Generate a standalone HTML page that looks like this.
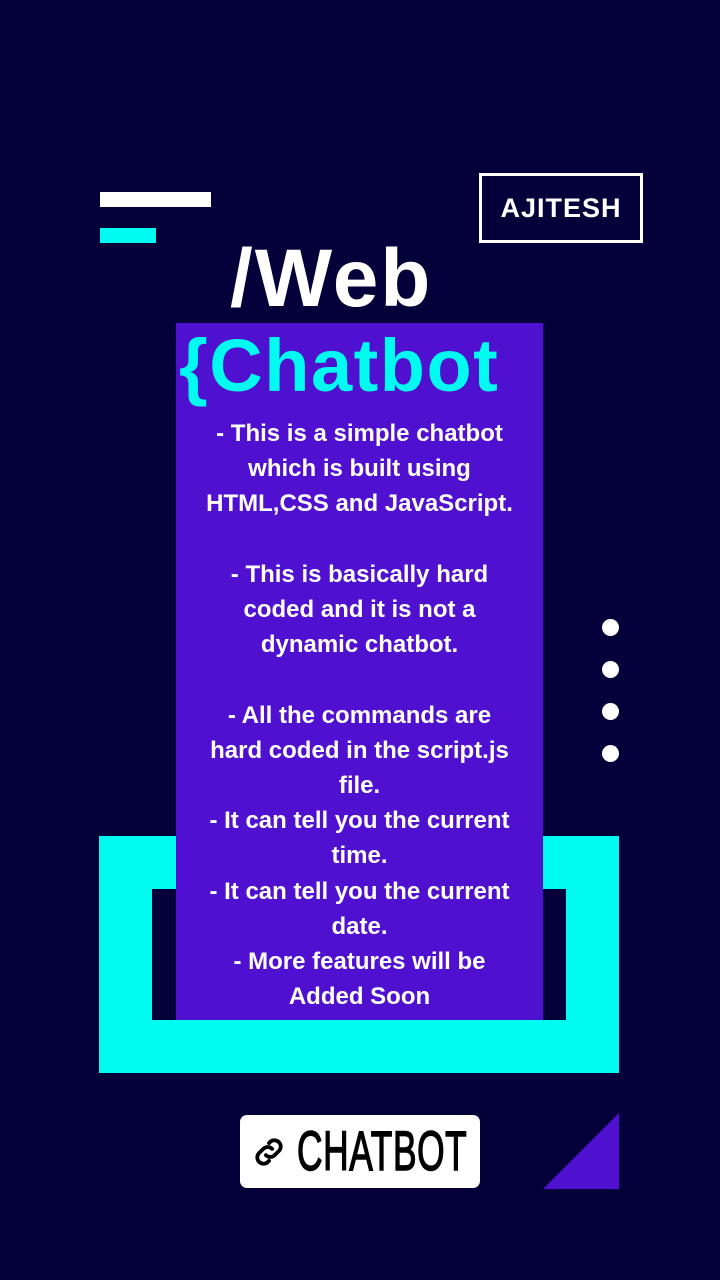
<!DOCTYPE html>
<html><head><meta charset="utf-8"><style>
*{margin:0;padding:0;box-sizing:border-box}
body{width:720px;height:1280px;background:#03003a;position:relative;overflow:hidden;font-family:"Liberation Sans",sans-serif}
.a{position:absolute}
</style></head><body>
<div class="a" style="left:100px;top:192px;width:111px;height:15px;background:#fff"></div>
<div class="a" style="left:100px;top:228px;width:56px;height:15px;background:#00fcf0"></div>
<div class="a" style="left:479px;top:173px;width:164px;height:70px;border:3px solid #fff;color:#fff;font-weight:bold;font-size:27px;text-align:center;line-height:64px;letter-spacing:1px">AJITESH</div>
<div class="a" style="left:99px;top:836px;width:520px;height:237px;background:#00fcf0"></div>
<div class="a" style="left:152px;top:889px;width:414px;height:131px;background:#03003a"></div>
<div class="a" style="left:176px;top:323px;width:367px;height:697px;background:#5010d0"></div>
<div class="a" style="left:230px;top:234px;color:#fff;font-weight:bold;font-size:82px;line-height:90px;letter-spacing:2px">/Web</div>
<div class="a" style="left:179px;top:324px;color:#00fcf0;font-weight:bold;font-size:74px;line-height:84px;letter-spacing:1.5px">{Chatbot</div>
<div class="a" style="left:176px;top:416px;width:367px;color:#fff;font-weight:bold;font-size:24px;line-height:35.2px;text-align:center">- This is a simple chatbot<br>which is built using<br>HTML,CSS and JavaScript.<br>&nbsp;<br>- This is basically hard<br>coded and it is not a<br>dynamic chatbot.<br>&nbsp;<br>- All the commands are<br>hard coded in the script.js<br>file.<br>- It can tell you the current<br>time.<br>- It can tell you the current<br>date.<br>- More features will be<br>Added Soon</div>
<div class="a" style="left:602px;top:619px;width:17px;height:17px;border-radius:50%;background:#fff"></div>
<div class="a" style="left:602px;top:661px;width:17px;height:17px;border-radius:50%;background:#fff"></div>
<div class="a" style="left:602px;top:703px;width:17px;height:17px;border-radius:50%;background:#fff"></div>
<div class="a" style="left:602px;top:745px;width:17px;height:17px;border-radius:50%;background:#fff"></div>
<div class="a" style="left:240px;top:1115px;width:240px;height:73px;background:#fff;border-radius:7px"></div>
<svg class="a" style="left:250px;top:1133px" width="38" height="38" viewBox="0 0 24 24" fill="none" stroke="#000" stroke-width="2.4" stroke-linecap="round"><path d="M10 14a4 4 0 0 0 5.6 0l3-3a4 4 0 0 0-5.6-5.6l-1 1"/><path d="M14 10a4 4 0 0 0-5.6 0l-3 3a4 4 0 0 0 5.6 5.6l1-1"/></svg>
<div class="a" style="left:297px;top:1118px;color:#000;font-size:56px;line-height:66px;transform:scaleX(0.63);transform-origin:left top;letter-spacing:1px;-webkit-text-stroke:1.5px #000">CHATBOT</div>
<svg class="a" style="left:543px;top:1113px" width="76" height="76"><polygon points="76,0 76,76 0,76" fill="#5010d0"/></svg>
</body></html>
